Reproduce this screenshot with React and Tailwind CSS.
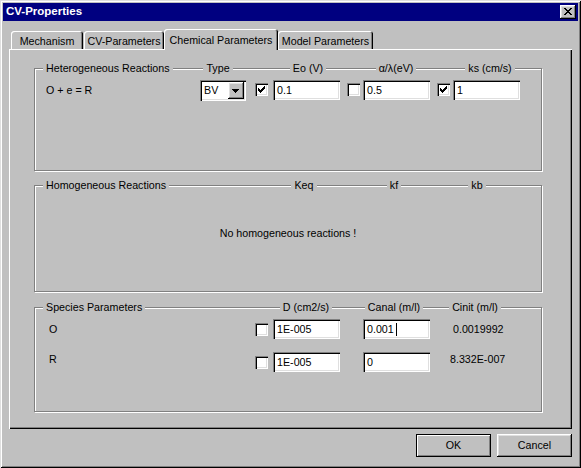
import React from "react";

const raised =
  "shadow-[inset_-1px_-1px_0_#000,inset_1px_1px_0_#fff,inset_-2px_-2px_0_#808080,inset_2px_2px_0_#dfdfdf]";
const sunken =
  "shadow-[inset_1px_1px_0_#808080,inset_2px_2px_0_#000,inset_-1px_-1px_0_#fff,inset_-2px_-2px_0_#dfdfdf]";
const etched = "border border-[#808080] shadow-[inset_1px_1px_0_#fff,1px_1px_0_#fff]";

// little bitmaps, classic win look
const CHECK = ["......#", ".....##", "#...###", "##.###.", "#####..", ".###...", "..#...."];
const XMARK = ["##....##", ".##..##.", "..####..", "...##...", "..####..", ".##..##.", "##....##"];
const ARROW = ["#######", ".#####.", "..###..", "...#..."];

const Bitmap = ({ rows, w, h, ox, oy }) => (
  <svg width={w} height={h} viewBox={`0 0 ${w} ${h}`} shapeRendering="crispEdges" className="block">
    {rows.map((row, y) =>
      row.split("").map((c, x) =>
        c === "#" ? <rect key={x + "-" + y} x={x + ox} y={y + oy} width="1" height="1" fill="#000" /> : null
      )
    )}
  </svg>
);

const Checkbox = ({ checked }) => (
  <div className={"w-[13px] h-[13px] shrink-0 bg-white " + sunken}>
    {checked && <Bitmap rows={CHECK} w={13} h={13} ox={3} oy={3} />}
  </div>
);

const Edit = ({ children, cursor }) => (
  <div className={"w-[67px] h-[20px] shrink-0 bg-white pl-[4px] flex items-center " + sunken}>
    <span>{children}</span>
    {cursor && <span className="ml-[2px] w-px h-[13px] bg-black"></span>}
  </div>
);

const Label = ({ children }) => <span className="px-[3px] bg-[#c0c0c0] leading-[13px] whitespace-nowrap">{children}</span>;

const Tab = ({ children, width, active }) => {
  if (active) {
    return (
      <div
        className={
          "relative z-10 h-[21px] -mb-[1px] bg-[#c0c0c0] flex justify-center pt-[3px] rounded-t-[3px] shadow-[inset_1px_1px_0_#fff,inset_-1px_0_0_#000,inset_-2px_0_0_#808080] " +
          width
        }
      >
        {children}
      </div>
    );
  }
  return (
    <div
      className={
        "h-[18px] flex items-center justify-center pt-[2px] rounded-t-[3px] shadow-[inset_1px_1px_0_#fff,inset_-1px_0_0_#000,inset_-2px_0_0_#808080] " +
        width
      }
    >
      {children}
    </div>
  );
};

export default function App() {
  return (
    <div
      className={
        "w-[581px] h-[468px] bg-[#c0c0c0] p-[3px] flex flex-col text-[10.7px] text-black font-['Liberation_Sans',Arial,sans-serif] shadow-[inset_1px_1px_0_#dfdfdf,inset_-1px_-1px_0_#000,inset_2px_2px_0_#fff,inset_-2px_-2px_0_#808080]"
      }
    >
      {/* title bar */}
      <div className="h-[18px] shrink-0 bg-[#000080] flex items-center pl-[3px] pr-[2px]">
        <span className="text-white font-bold text-[11.5px]">CV-Properties</span>
        <div className={"ml-auto w-[16px] h-[14px] bg-[#c0c0c0] " + raised}>
          <Bitmap rows={XMARK} w={16} h={14} ox={4} oy={3} />
        </div>
      </div>

      {/* tabs */}
      <div className="mt-[8px] ml-[6px] pl-[2px] h-[20px] shrink-0 flex items-end">
        <Tab width="w-[72px]">Mechanism</Tab>
        <div className="w-px"></div>
        <Tab width="w-[80px]">CV-Parameters</Tab>
        <Tab width="w-[114px]" active>
          Chemical Parameters
        </Tab>
        <Tab width="w-[95px]">Model Parameters</Tab>
      </div>

      <div className="ml-[6px] w-[563px] h-[380px] shrink-0 flex flex-col shadow-[inset_1px_1px_0_#fff,inset_-1px_-1px_0_#000,inset_-2px_-2px_0_#808080]">
        {/* heterogeneous */}
        <div className={"ml-[25px] mt-[19px] w-[508px] h-[103px] flex flex-col " + etched}>
          <div className="flex h-[13px] -mt-[7px] items-center">
            <div className="w-[138px] flex pl-[8px]">
              <Label>Heterogeneous Reactions</Label>
            </div>
            <div className="w-[90px] flex justify-center">
              <Label>Type</Label>
            </div>
            <div className="w-[90px] flex justify-center">
              <Label>Eo (V)</Label>
            </div>
            <div className="w-[86px] flex justify-center">
              <Label>α/λ(eV)</Label>
            </div>
            <div className="w-[102px] flex justify-center">
              <Label>ks (cm/s)</Label>
            </div>
          </div>
          <div className="mt-[5px] flex items-start">
            <div className="w-[165px] h-[20px] pl-[11px] flex items-center">O + e = R</div>
            <div className={"w-[46px] h-[21px] bg-white flex items-center pl-[4px] " + sunken}>
              <span>BV</span>
              <div className={"ml-auto mr-[2px] w-[16px] h-[17px] bg-[#c0c0c0] " + raised}>
                <Bitmap rows={ARROW} w={16} h={17} ox={4} oy={7} />
              </div>
            </div>
            <div className="ml-[9px] mt-[3px]">
              <Checkbox checked />
            </div>
            <div className="ml-[5px]">
              <Edit>0.1</Edit>
            </div>
            <div className="ml-[7px] mt-[3px]">
              <Checkbox />
            </div>
            <div className="ml-[3px]">
              <Edit>0.5</Edit>
            </div>
            <div className="ml-[7px] mt-[3px]">
              <Checkbox checked />
            </div>
            <div className="ml-[3px]">
              <Edit>1</Edit>
            </div>
          </div>
        </div>

        {/* homogeneous */}
        <div className={"ml-[25px] mt-[14px] w-[508px] h-[107px] flex flex-col " + etched}>
          <div className="flex h-[13px] -mt-[7px] items-center">
            <div className="w-[224px] flex pl-[8px]">
              <Label>Homogeneous Reactions</Label>
            </div>
            <div className="w-[90px] flex justify-center">
              <Label>Keq</Label>
            </div>
            <div className="w-[90px] flex justify-center">
              <Label>kf</Label>
            </div>
            <div className="w-[76px] flex justify-center">
              <Label>kb</Label>
            </div>
          </div>
          <div className="mt-[35px] leading-[13px] text-center">No homogeneous reactions !</div>
        </div>

        {/* species */}
        <div className={"ml-[25px] mt-[15px] w-[508px] h-[105px] flex flex-col " + etched}>
          <div className="flex h-[13px] -mt-[7px] items-center">
            <div className="w-[226px] flex pl-[8px]">
              <Label>Species Parameters</Label>
            </div>
            <div className="w-[90px] flex justify-center">
              <Label>D (cm2/s)</Label>
            </div>
            <div className="w-[86px] flex justify-center">
              <Label>Canal (m/l)</Label>
            </div>
            <div className="w-[76px] flex justify-center">
              <Label>Cinit (m/l)</Label>
            </div>
          </div>
          <div className="mt-[5px] h-[20px] flex items-center">
            <div className="w-[220px] pl-[14px]">O</div>
            <Checkbox />
            <div className="ml-[5px]">
              <Edit>1E-005</Edit>
            </div>
            <div className="ml-[23px]">
              <Edit cursor>0.001</Edit>
            </div>
            <div className="ml-[23px]">0.0019992</div>
          </div>
          <div className="mt-[13px] h-[20px] flex items-center">
            <div className="w-[220px] pl-[14px] mb-[5px]">R</div>
            <Checkbox />
            <div className="ml-[5px]">
              <Edit>1E-005</Edit>
            </div>
            <div className="ml-[23px]">
              <Edit>0</Edit>
            </div>
            <div className="ml-[20px] mb-[5px]">8.332E-007</div>
          </div>
        </div>
      </div>

      {/* buttons */}
      <div className="mt-[5px] ml-[413px] flex gap-[6px]">
        <div className="w-[75px] h-[23px] border border-black flex items-center justify-center shadow-[inset_1px_1px_0_#fff,inset_-1px_-1px_0_#808080]">
          OK
        </div>
        <div className={"w-[75px] h-[23px] flex items-center justify-center " + raised}>Cancel</div>
      </div>
    </div>
  );
}
